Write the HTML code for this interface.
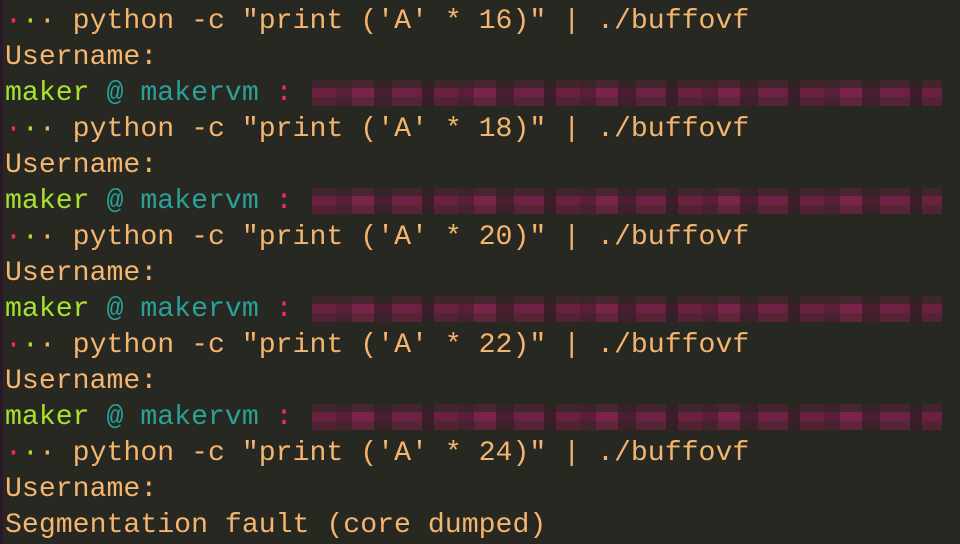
<!DOCTYPE html>
<html><head><style>
html,body{margin:0;padding:0;}
body{width:960px;height:544px;background:#272822;overflow:hidden;position:relative;
font-family:"Liberation Mono",monospace;font-size:28.2px;}
.edge{position:absolute;left:0;top:0;width:3px;height:544px;background:#2a1a28;}
.l{position:absolute;left:5px;height:36px;line-height:36px;white-space:pre;color:#f4b56e;}
.p{color:#f9266e}.g{color:#a6e22e}.o{color:#f4b56e}.c{color:#2aa198}
.blur{position:absolute;left:312px;width:630px;height:26px;
background:
repeating-linear-gradient(90deg,#6a2140 0 24px,#5a1e38 24px 40px,#7b2449 40px 62px,#4a1d30 62px 80px,#6e2243 80px 110px,#3e1c2a 110px 122px);}
.blur:before{content:"";position:absolute;left:0;right:0;top:0;height:8px;background:rgba(39,40,34,0.6);}
.blur:after{content:"";position:absolute;left:0;right:0;bottom:0;height:9px;background:rgba(39,40,34,0.35);}
</style></head><body>
<div class="edge"></div>
<div class="l" style="top:4px"><span class="p">·</span><span class="g">·</span><span class="o">·</span> python -c "print ('A' * 16)" | ./buffovf</div>
<div class="l" style="top:40px">Username:</div>
<div class="l" style="top:76px"><span class="g">maker</span> <span class="c">@ makervm</span> <span class="p">:</span></div>
<div class="blur" style="top:80px"></div>
<div class="l" style="top:112px"><span class="p">·</span><span class="g">·</span><span class="o">·</span> python -c "print ('A' * 18)" | ./buffovf</div>
<div class="l" style="top:148px">Username:</div>
<div class="l" style="top:184px"><span class="g">maker</span> <span class="c">@ makervm</span> <span class="p">:</span></div>
<div class="blur" style="top:188px"></div>
<div class="l" style="top:220px"><span class="p">·</span><span class="g">·</span><span class="o">·</span> python -c "print ('A' * 20)" | ./buffovf</div>
<div class="l" style="top:256px">Username:</div>
<div class="l" style="top:292px"><span class="g">maker</span> <span class="c">@ makervm</span> <span class="p">:</span></div>
<div class="blur" style="top:296px"></div>
<div class="l" style="top:328px"><span class="p">·</span><span class="g">·</span><span class="o">·</span> python -c "print ('A' * 22)" | ./buffovf</div>
<div class="l" style="top:364px">Username:</div>
<div class="l" style="top:400px"><span class="g">maker</span> <span class="c">@ makervm</span> <span class="p">:</span></div>
<div class="blur" style="top:404px"></div>
<div class="l" style="top:436px"><span class="p">·</span><span class="g">·</span><span class="o">·</span> python -c "print ('A' * 24)" | ./buffovf</div>
<div class="l" style="top:472px">Username:</div>
<div class="l" style="top:508px">Segmentation fault (core dumped)</div>
</body></html>
